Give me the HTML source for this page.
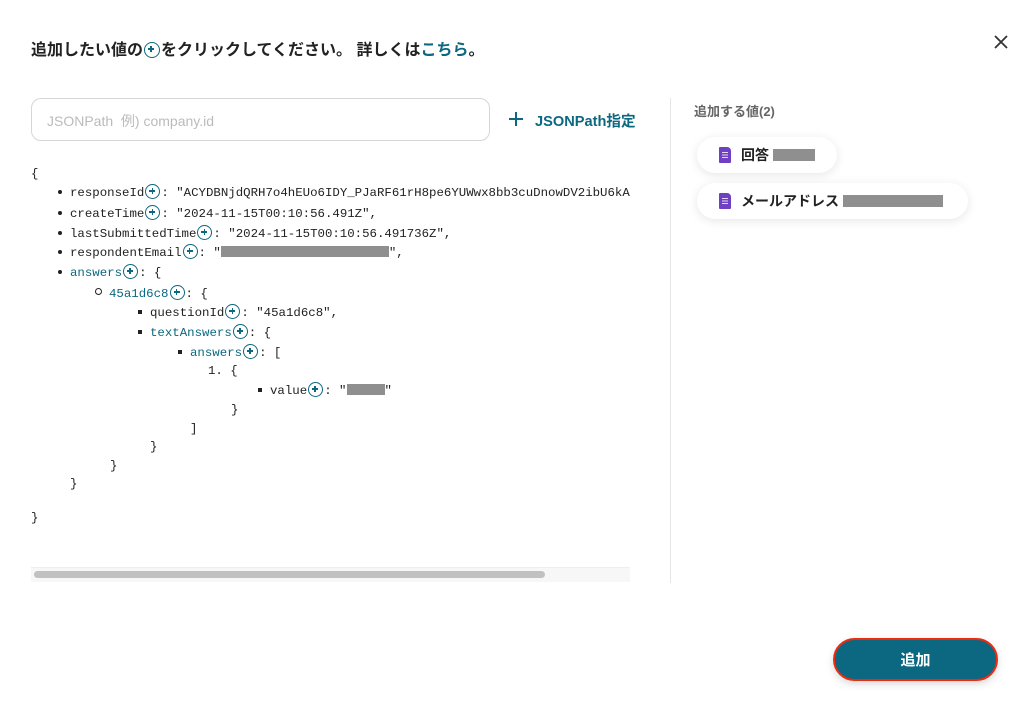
<!DOCTYPE html><html><head><meta charset="utf-8"><style>
body{margin:0;width:1027px;height:717px;background:#fff;font-family:"Liberation Sans","Noto Sans CJK JP",sans-serif;position:relative;overflow:hidden;color:#222}
.a{position:absolute}
.c{font-family:"Liberation Mono","DejaVu Sans Mono",monospace;font-size:12.4px;color:#222;white-space:nowrap;line-height:16px}
.p{display:inline-block;width:15px;height:15px;border:1.5px solid #0b6880;border-radius:50%;box-sizing:border-box;vertical-align:-3px;position:relative;margin:0 1px}
.p:before{content:"";position:absolute;left:3px;top:5.25px;width:6px;height:1.5px;background:#0b6880}
.p:after{content:"";position:absolute;left:5.25px;top:3px;width:1.5px;height:6px;background:#0b6880}
.b{display:inline-block;width:4px;height:4px;background:#222;border-radius:50%;vertical-align:2px;margin-right:8px}
.sq{display:inline-block;width:4px;height:4px;background:#222;vertical-align:2px;margin-right:8px}
.o{display:inline-block;width:5px;height:5px;border:1px solid #222;border-radius:50%;vertical-align:2px;margin-right:7px}
.t{color:#0b6880}
.g{display:inline-block;background:#8f8f8f;height:11px;vertical-align:-1px}
.chip{position:absolute;left:697px;height:36px;border-radius:18px;background:#fff;box-shadow:0 2px 10px rgba(0,0,0,.1);font-size:14px;font-weight:bold;display:flex;align-items:center}
.doc{width:12px;height:16px;background:#6f3fc4;border-radius:1px 4px 1px 1px;margin:0 10px 0 22px;position:relative}
.doc:after{content:"";position:absolute;left:3px;top:5px;width:6px;height:6px;background:repeating-linear-gradient(#fff 0 1px,transparent 1px 2.5px);opacity:.8}
</style></head><body>
<div class="a" style="left:31px;top:36px;font-size:16px;font-weight:bold;color:#222">追加したい値の<span class="p" style="width:16px;height:16px"></span>をクリックしてください。 詳しくは<span style="color:#0b6880">こちら</span>。</div>
<svg class="a" style="left:993px;top:34px" width="16" height="16" viewBox="0 0 16 16"><path d="M2 2L14 14M14 2L2 14" stroke="#333" stroke-width="1.8"/></svg>
<div class="a" style="left:31px;top:98px;width:459px;height:43px;border:1px solid #d6d6d6;border-radius:10px;box-sizing:border-box"></div>
<div class="a" style="left:47px;top:111px;font-size:14px;color:#bbb">JSONPath&nbsp; 例) company.id</div>
<svg class="a" style="left:509px;top:112px" width="14" height="14" viewBox="0 0 14 14"><path d="M7 0V14M0 7H14" stroke="#0b6880" stroke-width="2"/></svg>
<div class="a" style="left:535px;top:110px;font-size:14.6px;font-weight:bold;color:#0b6880">JSONPath指定</div>
<div class="a" style="left:670px;top:98px;width:1px;height:485px;background:#e6e6e6"></div>
<div class="a" style="left:694px;top:101px;font-size:13px;font-weight:bold;color:#666">追加する値(2)</div>
<div class="chip" style="top:137px;width:140px"><div class="doc"></div>回答&nbsp;<span class="g" style="width:42px;height:12px"></span></div>
<div class="chip" style="top:183px;width:271px"><div class="doc"></div>メールアドレス&nbsp;<span class="g" style="width:100px;height:12px"></span></div>

<div class="a c" style="left:31px;top:166px">{</div>
<div class="a c" style="left:58px;top:184px"><span class="b"></span>responseId<span class="p"></span>: "ACYDBNjdQRH7o4hEUo6IDY_PJaRF61rH8pe6YUWwx8bb3cuDnowDV2ibU6kA</div>
<div class="a c" style="left:58px;top:205px"><span class="b"></span>createTime<span class="p"></span>: "2024-11-15T00:10:56.491Z",</div>
<div class="a c" style="left:58px;top:225px"><span class="b"></span>lastSubmittedTime<span class="p"></span>: "2024-11-15T00:10:56.491736Z",</div>
<div class="a c" style="left:58px;top:244px"><span class="b"></span>respondentEmail<span class="p"></span>: "<span class="g" style="width:168px"></span>",</div>
<div class="a c" style="left:58px;top:264px"><span class="b"></span><span class="t">answers</span><span class="p"></span>: {</div>
<div class="a c" style="left:95px;top:285px"><span class="o"></span><span class="t">45a1d6c8</span><span class="p"></span>: {</div>
<div class="a c" style="left:138px;top:304px"><span class="sq"></span>questionId<span class="p"></span>: "45a1d6c8",</div>
<div class="a c" style="left:138px;top:324px"><span class="sq"></span><span class="t">textAnswers</span><span class="p"></span>: {</div>
<div class="a c" style="left:178px;top:344px"><span class="sq"></span><span class="t">answers</span><span class="p"></span>: [</div>
<div class="a c" style="left:208px;top:363px">1. {</div>
<div class="a c" style="left:258px;top:382px"><span class="sq"></span>value<span class="p"></span>: "<span class="g" style="width:38px"></span>"</div>
<div class="a c" style="left:231px;top:402px">}</div>
<div class="a c" style="left:190px;top:421px">]</div>
<div class="a c" style="left:150px;top:439px">}</div>
<div class="a c" style="left:110px;top:458px">}</div>
<div class="a c" style="left:70px;top:476px">}</div>
<div class="a c" style="left:31px;top:510px">}</div>
<div class="a" style="left:31px;top:567px;width:599px;height:14px;background:#f7f7f7;border-top:1px solid #eee"></div>
<div class="a" style="left:34px;top:571px;width:511px;height:7px;background:#c1c1c1;border-radius:4px"></div>
<div class="a" style="left:833px;top:638px;width:165px;height:43px;border-radius:22px;background:#0b6880;border:2.5px solid #ee2a10;box-sizing:border-box;box-shadow:0 3px 8px rgba(0,0,0,.15);color:#fff;font-size:15px;font-weight:bold;display:flex;align-items:center;justify-content:center">追加</div>
</body></html>
